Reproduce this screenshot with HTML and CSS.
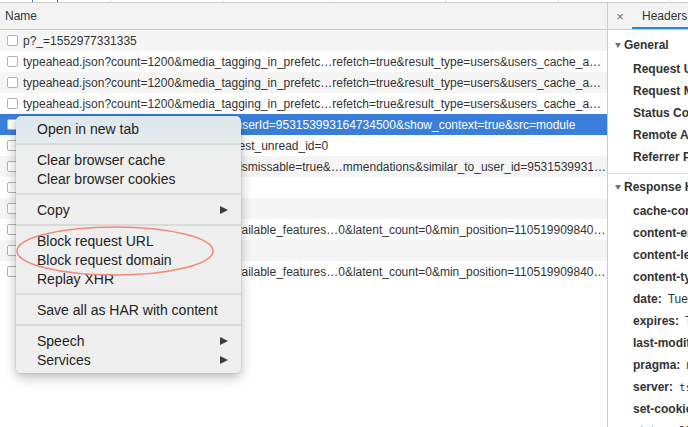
FILE: index.html
```html
<!DOCTYPE html>
<html>
<head>
<meta charset="utf-8">
<link rel="stylesheet" href="styles.css">
</head>
<body>
<div class="strip"></div>
<div class="main">
  <section class="list">
    <div class="list-head">Name</div>
    <div class="rows">
      <div class="row alt"><span class="cb"></span><span class="name">p?_=1552977331335</span></div>
      <div class="row"><span class="cb"></span><span class="name">typeahead.json?count=1200&amp;media_tagging_in_prefetc…refetch=true&amp;result_type=users&amp;users_cache_a…</span></div>
      <div class="row alt"><span class="cb"></span><span class="name">typeahead.json?count=1200&amp;media_tagging_in_prefetc…refetch=true&amp;result_type=users&amp;users_cache_a…</span></div>
      <div class="row"><span class="cb"></span><span class="name">typeahead.json?count=1200&amp;media_tagging_in_prefetc…refetch=true&amp;result_type=users&amp;users_cache_a…</span></div>
      <div class="row sel"><span class="cb"></span><span class="name">related_users?display_location=profile&amp;userId=953153993164734500&amp;show_context=true&amp;src=module</span></div>
      <div class="row"><span class="cb"></span><span class="name">user_updates.json?active=true&amp;tz=1&amp;latest_unread_id=0</span></div>
      <div class="row alt"><span class="cb"></span><span class="name">recommendations.json?count=3&amp;tz=1&amp;dismissable=true&amp;…mmendations&amp;similar_to_user_id=9531539931…</span></div>
      <div class="row"><span class="cb"></span><span class="name">p?_=1552977338452</span></div>
      <div class="row alt"><span class="cb"></span><span class="name">update_subscriptions</span></div>
      <div class="row"><span class="cb"></span><span class="name">timeline?composed_count=0&amp;include_available_features…0&amp;latent_count=0&amp;min_position=110519909840…</span></div>
      <div class="row alt"><span class="cb"></span><span class="name">p?_=1552977341863</span></div>
      <div class="row"><span class="cb"></span><span class="name">timeline?composed_count=0&amp;include_available_features…0&amp;latent_count=0&amp;min_position=110519909840…</span></div>
    </div>
  </section>
  <aside class="detail">
    <div class="tabs">
      <span class="close">×</span>
      <span class="tab active">Headers</span>
    </div>
    <div class="section first">
      <div class="sec-title"><span class="tri"></span>General</div>
      <div class="kv"><b>Request URL:</b><span class="v">https://twitter.com/i/related_users/953153993164734500</span></div>
      <div class="kv"><b>Request Method:</b><span class="v">GET</span></div>
      <div class="kv"><b>Status Code:</b><span class="v">200</span></div>
      <div class="kv"><b>Remote Address:</b><span class="v">104.244.42.1:443</span></div>
      <div class="kv"><b>Referrer Policy:</b><span class="v">no-referrer-when-downgrade</span></div>
    </div>
    <div class="section resp">
      <div class="sec-title"><span class="tri"></span>Response Headers</div>
      <div class="kv"><b>cache-control:</b><span class="v">no-cache, no-store, must-revalidate</span></div>
      <div class="kv"><b>content-encoding:</b><span class="v">gzip</span></div>
      <div class="kv"><b>content-length:</b><span class="v">2371</span></div>
      <div class="kv"><b>content-type:</b><span class="v">application/json;charset=utf-8</span></div>
      <div class="kv"><b>date:</b><span class="v">Tue, 19 Mar 2019 06:35:41 GMT</span></div>
      <div class="kv"><b>expires:</b><span class="v">Tue, 31 Mar 1981 05:00:00 GMT</span></div>
      <div class="kv"><b>last-modified:</b><span class="v">Tue, 19 Mar 2019 06:35:41 GMT</span></div>
      <div class="kv"><b>pragma:</b><span class="v">no-cache</span></div>
      <div class="kv"><b>server:</b><span class="v mono">tsa_b</span></div>
      <div class="kv"><b>set-cookie:</b><span class="v">lang=en; Path=/</span></div>
      <div class="kv"><b>status:</b><span class="v">200 OK</span></div>
    </div>
  </aside>
</div>

<div class="menu">
  <div class="mi">Open in new tab</div>
  <div class="sep"></div>
  <div class="mi">Clear browser cache</div>
  <div class="mi">Clear browser cookies</div>
  <div class="sep"></div>
  <div class="mi">Copy<span class="arrow"></span></div>
  <div class="sep"></div>
  <div class="mi">Block request URL</div>
  <div class="mi">Block request domain</div>
  <div class="mi">Replay XHR</div>
  <div class="sep"></div>
  <div class="mi">Save all as HAR with content</div>
  <div class="sep"></div>
  <div class="mi">Speech<span class="arrow"></span></div>
  <div class="mi">Services<span class="arrow"></span></div>
</div>

<svg class="ring" width="200" height="52" viewBox="0 0 200 52">
  <ellipse cx="100" cy="26" rx="98" ry="24" fill="none" stroke="#f08b78" stroke-width="1.6"/>
</svg>
</body>
</html>
```

FILE: styles.css
```css
html, body {
  margin: 0;
  padding: 0;
}
body {
  width: 688px;
  height: 427px;
  overflow: hidden;
  position: relative;
  background: #fff;
  font-family: "Liberation Sans", Arial, Helvetica, sans-serif;
  font-size: 12px;
  color: #333;
}

.strip {
  height: 2px;
  border-bottom: 1px solid #cbcbcb;
  background:
    linear-gradient(#3b78e7, #3b78e7) 32px 0 / 1px 100% no-repeat,
    linear-gradient(#d9302a, #d9302a) 57px 0 / 1px 100% no-repeat,
    repeating-linear-gradient(90deg, #fff 0 111px, #dcdcdc 111px 112px) 0 0 / 111.6px 100% repeat-x;
  background-color: #fff;
}

.main {
  display: flex;
  height: 424px;
}

.list {
  width: 608px;
  flex: none;
  box-sizing: border-box;
  border-right: 1px solid #cbcbcb;
}

.list-head {
  height: 26px;
  line-height: 26px;
  padding-left: 5px;
  background: #f3f3f3;
  border-bottom: 1px solid #cbcbcb;
}

.row {
  height: 21px;
  display: flex;
  align-items: center;
  padding-left: 7px;
  background: #fff;
  color: #333;
}
.row.alt {
  background: #f5f5f5;
}
.row.sel {
  background: #3a7edb;
  color: #fff;
}
.cb {
  flex: none;
  width: 11px;
  height: 11px;
  box-sizing: border-box;
  border: 1px solid #b3b3b3;
  border-radius: 2px;
  background: #fff;
  margin-right: 5px;
}
.name {
  flex: 1;
  min-width: 0;
  white-space: nowrap;
  overflow: hidden;
  text-overflow: clip;
}

.detail {
  flex: 1;
  min-width: 0;
  overflow: hidden;
  white-space: nowrap;
}

.tabs {
  height: 26px;
  display: flex;
  background: #f3f3f3;
  border-bottom: 1px solid #cbcbcb;
}
.close {
  flex: none;
  width: 24px;
  display: flex;
  align-items: center;
  justify-content: center;
  font-size: 13px;
  color: #6b6b6b;
}
.tab {
  flex: none;
  display: flex;
  align-items: center;
  padding: 0 10px;
  color: #333;
}
.tab.active {
  box-shadow: inset 0 -2px 0 #1b8ceb;
}

.section {
  padding: 4px 0 5px;
  border-bottom: 1px solid #e2e2e2;
}
.section.resp {
  padding-top: 2px;
  border-bottom: none;
}
.sec-title {
  height: 22px;
  display: flex;
  align-items: center;
  padding-left: 7px;
  margin-bottom: 2px;
  font-weight: bold;
  color: #333;
}
.tri {
  width: 0;
  height: 0;
  border-left: 3px solid transparent;
  border-right: 3px solid transparent;
  border-top: 5px solid #737373;
  margin-right: 3px;
}
.kv {
  height: 22px;
  line-height: 22px;
  padding-left: 25px;
  color: #333;
}
.kv b {
  font-weight: bold;
}
.v {
  margin-left: 6px;
}
.v.mono {
  font-family: "DejaVu Sans Mono", "Liberation Mono", monospace;
  font-size: 11px;
}

.menu {
  position: absolute;
  left: 16px;
  top: 116px;
  width: 225px;
  box-sizing: border-box;
  padding: 3px 0 4px;
  border-radius: 5px;
  background: linear-gradient(180deg, #dde7ec 0px, #e2eaee 18px, #eaeded 30px, #eeeeee 42px, #efefef 100%);
  box-shadow: 0 0 0 0.5px rgba(0, 0, 0, 0.12), 0 4px 12px rgba(0, 0, 0, 0.28);
  font-size: 14px;
  color: #232323;
}
.mi {
  height: 19px;
  display: flex;
  align-items: center;
  justify-content: space-between;
  padding: 0 13px 0 21px;
  white-space: nowrap;
}
.sep {
  height: 2px;
  margin: 5px 0;
  background: #dadada;
}
.arrow {
  width: 0;
  height: 0;
  border-top: 4.5px solid transparent;
  border-bottom: 4.5px solid transparent;
  border-left: 8px solid #3a3a3a;
}

.ring {
  position: absolute;
  left: 15px;
  top: 225px;
  overflow: visible;
}
```
